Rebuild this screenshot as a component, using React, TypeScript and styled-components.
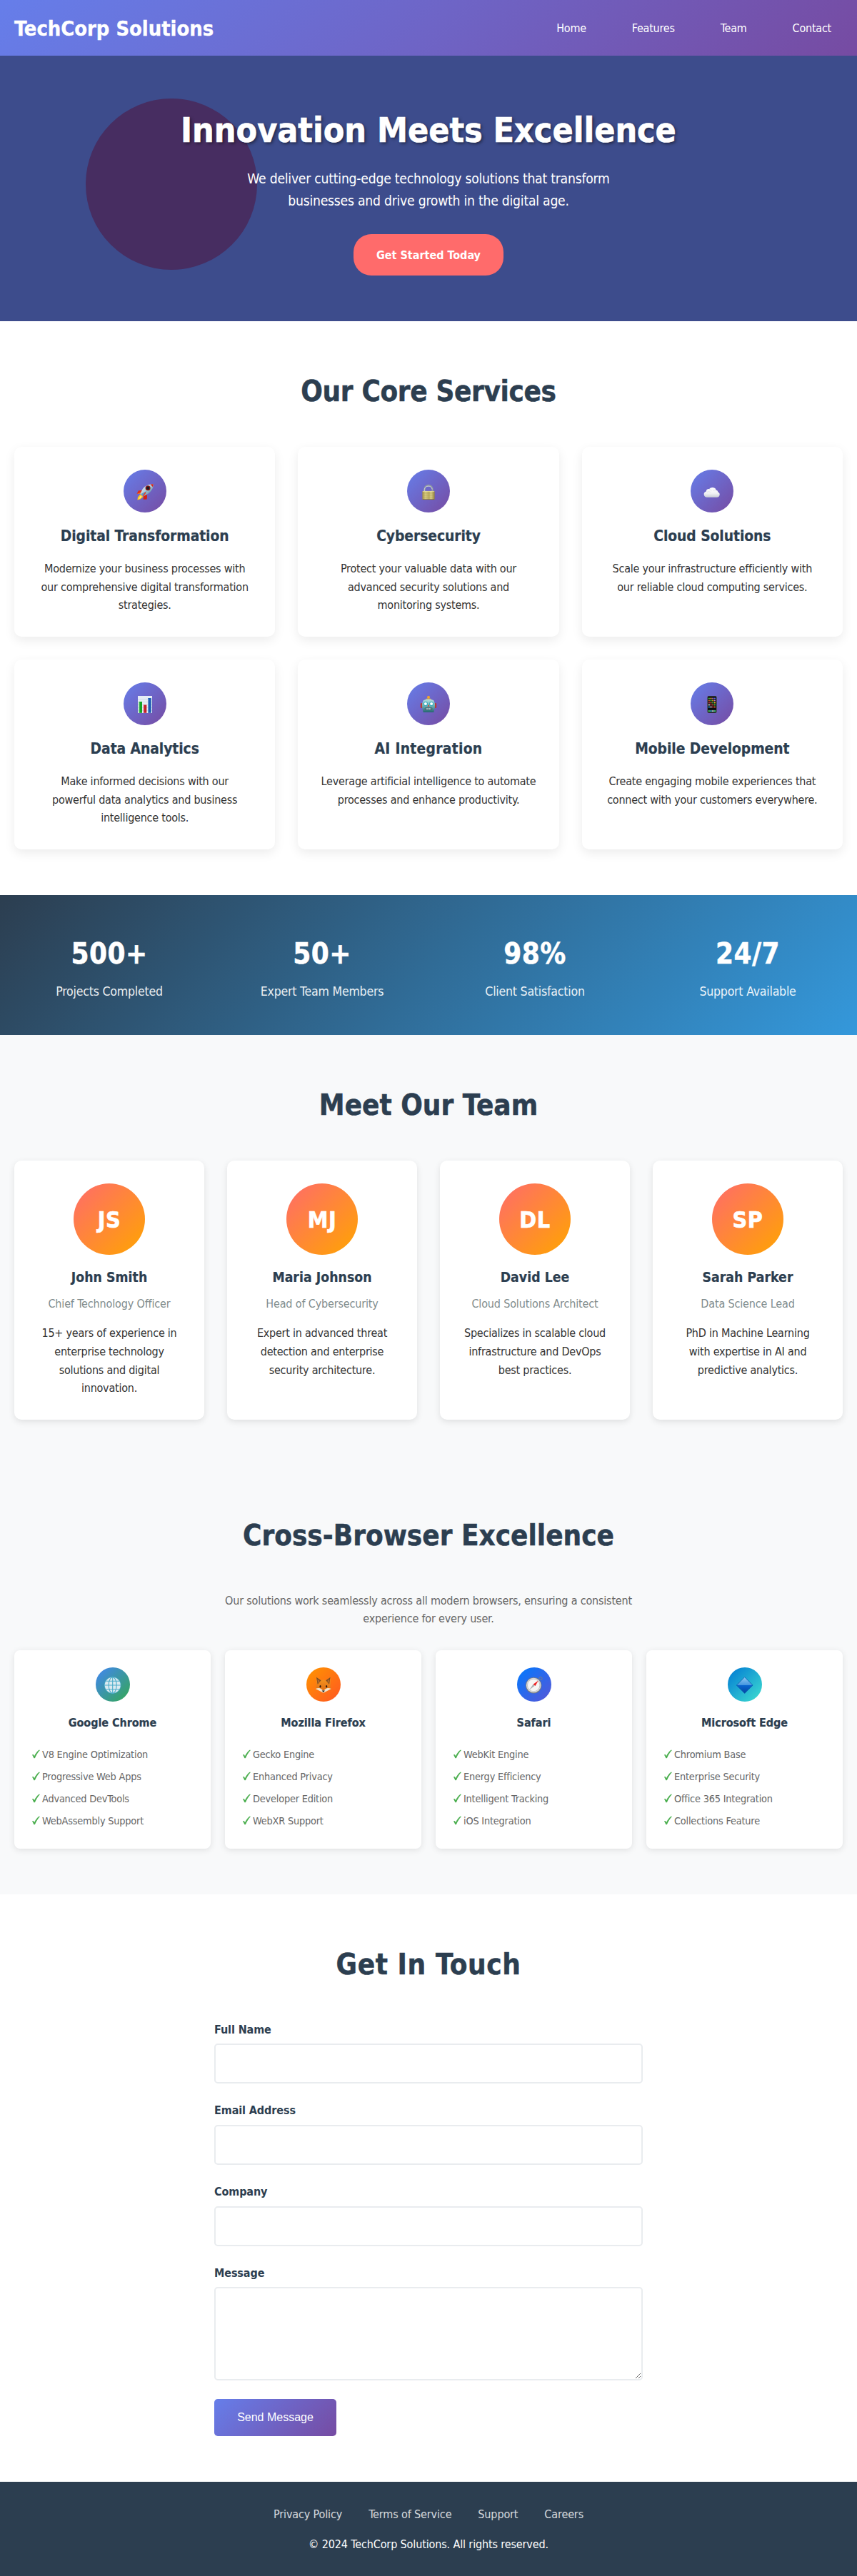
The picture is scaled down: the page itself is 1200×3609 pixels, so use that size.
import React from "react";
import styled, { createGlobalStyle } from "styled-components";

const GlobalStyle = createGlobalStyle`
  * { margin: 0; padding: 0; box-sizing: border-box; }
  body {
    font-family: "DejaVu Sans Condensed", "DejaVu Sans", "Noto Sans", sans-serif;
    font-size: 16px;
    line-height: 1.6;
    letter-spacing: -0.23px;
    color: #333;
    background: #fff;
  }
  h1, h2, h3, h4 {
    letter-spacing: -0.003em;
    -webkit-text-stroke: 0.012em currentColor;
  }
  ul { list-style: none; }
  a { color: inherit; text-decoration: none; }
`;

/* ---------- shared ---------- */

const Container = styled.div`
  max-width: 1200px;
  margin: 0 auto;
  padding: 0 20px;
`;

const Section = styled.section<{ $tint?: boolean }>`
  padding: 64px 0;
  background: ${(p) => (p.$tint ? "#f8f9fa" : "#fff")};
`;

const SectionTitle = styled.h2<{ $track?: number }>`
  padding-top: 2px;
  margin-bottom: 46px;
  font-size: 40px;
  line-height: 64px;
  text-align: center;
  color: #2c3e50;
  letter-spacing: ${(p) => p.$track ?? 0}px;
`;

const Grid = styled.div<{ $cols: number; $gap: number }>`
  display: grid;
  grid-template-columns: repeat(${(p) => p.$cols}, 1fr);
  gap: ${(p) => p.$gap}px;
`;

const Paragraph = styled.p`
  padding-top: 1px;
  margin-bottom: -1px;
  white-space: pre-line;
`;

/* ---------- header ---------- */

const Header = styled.header`
  padding: 16px 0;
  color: #fff;
  background: linear-gradient(135deg, #667eea 0%, #764ba2 100%);
`;

const Nav = styled(Container).attrs({ as: "nav" })`
  display: flex;
  align-items: center;
  justify-content: space-between;
`;

const Logo = styled.div`
  padding-top: 1px;
  margin-bottom: -1px;
  font-size: 28.8px;
  font-weight: bold;
  line-height: 46px;
  letter-spacing: 0;
  -webkit-text-stroke: 0.012em currentColor;
`;

const NavLinks = styled.ul`
  display: flex;
  gap: 32px;
`;

const NavLink = styled.a`
  display: block;
  padding: 9px 16px 7px;
`;

/* ---------- hero ---------- */

const Hero = styled.section`
  position: relative;
  padding: 64px 0;
  text-align: center;
  color: #fff;
  background: #3d4c8c;
`;

const HeroCircle = styled.div`
  position: absolute;
  left: 10%;
  top: 60px;
  width: 240px;
  height: 240px;
  border-radius: 50%;
  background: #472d61;
`;

const HeroContent = styled(Container)`
  position: relative;
`;

const HeroTitle = styled.h1`
  padding-top: 2px;
  margin-bottom: 14px;
  font-size: 48px;
  line-height: 76.8px;
  letter-spacing: -0.05px;
  text-shadow: 2px 2px 4px rgba(0, 0, 0, 0.5);
`;

const HeroText = styled.p`
  max-width: 600px;
  padding-top: 1px;
  margin: 0 auto 31px;
  font-size: 19.2px;
  line-height: 30.72px;
  letter-spacing: -0.24px;
`;

const HeroButton = styled.a`
  display: inline-block;
  vertical-align: top;
  padding: 17px 32px 15px;
  border-radius: 25px;
  font-weight: bold;
  letter-spacing: 0;
  background: #ff6b6b;
`;

/* ---------- services ---------- */

const ServiceCard = styled.article`
  padding: 32px;
  border-radius: 10px;
  text-align: center;
  background: #fff;
  box-shadow: 0 5px 15px rgba(0, 0, 0, 0.08);
`;

const IconCircle = styled.div<{ $size: number; $from: string; $to: string }>`
  display: flex;
  align-items: center;
  justify-content: center;
  width: ${(p) => p.$size}px;
  height: ${(p) => p.$size}px;
  margin: 0 auto 16px;
  padding-top: 2px;
  border-radius: 50%;
  background: linear-gradient(135deg, ${(p) => p.$from}, ${(p) => p.$to});
`;

const ServiceTitle = styled.h3<{ $track?: number }>`
  padding-top: 1px;
  margin-bottom: 15px;
  font-size: 20.8px;
  line-height: 33.28px;
  color: #2c3e50;
  letter-spacing: ${(p) => p.$track ?? -0.05}px;
`;

/* ---------- stats ---------- */

const Stats = styled.section`
  padding: 48px 0;
  text-align: center;
  color: #fff;
  background: linear-gradient(135deg, #2c3e50, #3498db);
`;

const StatNumber = styled.div`
  padding-top: 2px;
  margin-bottom: 6px;
  font-size: 40px;
  font-weight: bold;
  line-height: 64px;
  letter-spacing: 0.4px;
  -webkit-text-stroke: 0.012em currentColor;
`;

const StatLabel = styled.div`
  padding-top: 1px;
  margin-bottom: -1px;
  font-size: 17.6px;
  line-height: 28.16px;
  opacity: 0.9;
`;

/* ---------- team ---------- */

const TeamCard = styled.article`
  padding: 32px;
  border-radius: 10px;
  text-align: center;
  background: #fff;
  box-shadow: 0 3px 10px rgba(0, 0, 0, 0.1);
`;

const Avatar = styled.div`
  display: flex;
  align-items: center;
  justify-content: center;
  width: 100px;
  height: 100px;
  margin: 0 auto 16px;
  padding-top: 3px;
  border-radius: 50%;
  font-size: 32px;
  font-weight: bold;
  letter-spacing: 0.02em;
  -webkit-text-stroke: 0.02em currentColor;
  color: #fff;
  background: linear-gradient(135deg, #ff6b6b, #ffa500);
`;

const MemberName = styled.h3`
  padding-top: 1px;
  margin-bottom: 7px;
  font-size: 19.2px;
  line-height: 30.72px;
  color: #2c3e50;
  letter-spacing: 0.08px;
`;

const Role = styled.p`
  padding-top: 1px;
  margin-bottom: 15px;
  letter-spacing: -0.15px;
  color: #7f8c8d;
`;

/* ---------- browsers ---------- */

const Intro = styled.p`
  max-width: 600px;
  padding-top: 1px;
  margin: 0 auto 31px;
  text-align: center;
  letter-spacing: -0.19px;
  color: #666;
`;

const BrowserCard = styled.article`
  padding: 24px;
  border-radius: 8px;
  background: #fff;
  box-shadow: 0 2px 10px rgba(0, 0, 0, 0.1);
`;

const BrowserName = styled.h4`
  padding-top: 1px;
  margin-bottom: 15px;
  text-align: center;
  color: #2c3e50;
`;

const FeatureItem = styled.li`
  display: flex;
  align-items: center;
  gap: 3px;
  padding: 5px 0 3px;
  font-size: 14.4px;
  line-height: 23.04px;
  letter-spacing: -0.2px;
  color: #666;
`;

/* ---------- contact ---------- */

const Form = styled.form`
  max-width: 600px;
  margin: 0 auto;
`;

const Field = styled.div`
  margin-bottom: 24px;
`;

const Label = styled.label`
  display: block;
  padding-top: 1px;
  margin-bottom: 7px;
  font-weight: bold;
  letter-spacing: -0.1px;
  color: #2c3e50;
`;

const Input = styled.input`
  display: block;
  width: 100%;
  height: 56px;
  padding: 16px;
  border: 2px solid #e9ecef;
  border-radius: 5px;
  font: inherit;
  background: #fff;
`;

const TextArea = styled.textarea`
  display: block;
  width: 100%;
  height: 130.6px;
  margin-bottom: 26.6px;
  padding: 16px;
  border: 2px solid #e9ecef;
  border-radius: 5px;
  font: inherit;
  background: #fff;
  resize: vertical;
`;

const Submit = styled.button`
  display: block;
  width: 171px;
  height: 52px;
  border: 0;
  border-radius: 5px;
  font: 16px "Liberation Sans", Arial, sans-serif;
  color: #fff;
  background: linear-gradient(135deg, #667eea, #764ba2);
`;

/* ---------- footer ---------- */

const Footer = styled.footer`
  padding: 33px 0 31px;
  text-align: center;
  letter-spacing: -0.13px;
  color: #fff;
  background: #2c3e50;
`;

const FooterLinks = styled.div`
  display: flex;
  justify-content: center;
  gap: 37px;
  margin-bottom: 16px;
`;

const FooterLink = styled.a`
  opacity: 0.8;
`;

/* ---------- icons ---------- */

const Svg = styled.svg`
  display: block;
  width: 24px;
  height: 24px;
`;

const Rocket = () => (
  <Svg viewBox="0 0 24 24">
    <defs>
      <linearGradient id="rk" x1="0" y1="0" x2="1" y2="1">
        <stop offset="0" stopColor="#f4f8fa" />
        <stop offset=".45" stopColor="#b5d0dc" />
        <stop offset="1" stopColor="#27608a" />
      </linearGradient>
    </defs>
    <path d="M9 9.5 2.8 10.6.6 14.8l6-.9z" fill="#e52a12" />
    <path d="M14 15.2 15 17.5l-.4 5-5 .3 .4-4.6z" fill="#d6200f" />
    <path d="M.8 15 6.7 12.7 7 14.6z" fill="#f68a1c" />
    <path d="M5.4 15.5 2 19.6 1.4 23.6 5.6 22.3 9.5 19z" fill="#ffc91f" />
    <path d="M6.2 17 3.2 22.5l4-3.3z" fill="#fff29a" />
    <path d="M23.8 1.2C18.2.8 11.6 3.4 8.3 8.8L5.4 14.7l4 3.9 5.7-3C20.8 12 23.9 6.5 23.8 1.2z" fill="url(#rk)" />
    <path d="M23.8 1.2 19.5 1.5 23 5.2z" fill="#d82418" />
    <circle cx="16.1" cy="6.7" r="3.5" fill="#8d1919" />
    <circle cx="16.2" cy="6.7" r="2.2" fill="#171d26" />
    <path d="m6.3 14.9 3 3 5.5-7.2z" fill="#3f8ec1" opacity=".75" />
    <path d="m12.3 12.3-3.7 5.6 1.2.3 3.7-4.6z" fill="#f03a1c" />
  </Svg>
);

const Lock = () => (
  <Svg viewBox="0 0 24 24">
    <defs>
      <linearGradient id="lk" x1="0" x2="1">
        <stop offset="0" stopColor="#a39044" />
        <stop offset=".25" stopColor="#d6ca80" />
        <stop offset=".55" stopColor="#b9aa5c" />
        <stop offset=".7" stopColor="#d9cf8a" />
        <stop offset="1" stopColor="#93813a" />
      </linearGradient>
    </defs>
    <path d="M6.5 12V8.5a5.5 5.7 0 0 1 11 0V12" fill="none" stroke="#8d97a3" strokeWidth="2.3" />
    <path d="M6.3 12V8.5a5.7 5.9 0 0 1 11 0" fill="none" stroke="#d5dbe0" strokeWidth=".9" />
    <rect x="3.4" y="11" width="17.2" height="12" rx=".8" fill="url(#lk)" />
    <path d="M3.5 14h17M3.5 17h17M3.5 20h17" stroke="#a7984d" strokeWidth=".5" opacity=".6" />
    <path d="M3.8 11.4h16.4" stroke="#eee6ad" strokeWidth=".7" />
    <path d="M3.8 22.6h16.4" stroke="#77672a" strokeWidth=".7" />
  </Svg>
);

const Cloud = () => (
  <Svg viewBox="0 0 24 24">
    <defs>
      <linearGradient id="cl" x1="0" y1="0" x2="0" y2="1">
        <stop offset="0" stopColor="#fff" />
        <stop offset=".6" stopColor="#f0f1f4" />
        <stop offset="1" stopColor="#c9cdd5" />
      </linearGradient>
    </defs>
    <path d="M5 19.8a4.5 4.3 0 0 1-1.2-8.4 4 3.7 0 0 1 4.3-3.3 5.2 4.4 0 0 1 9.5 1.4 3.5 3.3 0 0 1 2.900 2.900 3.900 3.900 0 0 1-1.800 7.400z" fill="url(#cl)" />
    <path d="M8 8.500q2.500.2 3.200 2.200M13.500 10.500q2-.9 3.800-.8M5 12.500q2.500-2 5 .2" fill="none" stroke="#d9dce2" strokeWidth=".6" />
  </Svg>
);

const Chart = () => (
  <Svg viewBox="0 0 24 24">
    <rect x="2" y="0" width="20" height="24" fill="#e5edf5" />
    <path d="M2 4.5h20M2 8.5h20M2 12.5h20M2 16.5h20M2 20.5h20" stroke="#b7c9da" strokeWidth=".5" />
    <rect x="3.5" y="8" width="4.5" height="15.8" fill="#12a526" />
    <rect x="9.8" y="12.5" width="4.5" height="11.3" fill="#c3202a" />
    <rect x="16.1" y="3" width="4.6" height="20.8" fill="#1b5cb4" />
    <path d="M4 8.5v15M10.3 13v10.5M16.6 3.5v20" stroke="#fff" opacity=".35" />
  </Svg>
);

const Robot = () => (
  <Svg viewBox="0 0 24 24">
    <defs>
      <linearGradient id="rb" x1="0" y1="0" x2="0" y2="1">
        <stop offset="0" stopColor="#b4e0e0" />
        <stop offset=".6" stopColor="#5fa3aa" />
        <stop offset="1" stopColor="#25646f" />
      </linearGradient>
    </defs>
    <rect x="11" y="1.5" width="2" height="4" fill="#6c7477" />
    <circle cx="12" cy="1.9" r="2" fill="#f2a22a" />
    <rect x="8" y="3.7" width="8" height="2" rx="1" fill="#cfae69" />
    <rect x=".8" y="10" width="3" height="7" rx="1.2" fill="#b63c38" />
    <rect x="20.2" y="10" width="3" height="7" rx="1.2" fill="#b63c38" />
    <path d="M5 6Q12 3.5 19 6q2.5 4 1.9 10l-1.6 7H4.7L3.1 16Q2.5 10 5 6z" fill="url(#rb)" />
    <circle cx="7.9" cy="11" r="3.1" fill="#35aebe" />
    <circle cx="16.1" cy="11" r="3.1" fill="#35aebe" />
    <circle cx="7.9" cy="11" r="2" fill="#fff" />
    <circle cx="16.1" cy="11" r="2" fill="#fff" />
    <path d="m12 12 1.5 2.7h-3z" fill="#d44332" />
    <rect x="6.8" y="16.5" width="10.4" height="3.2" rx="1" fill="#2d515a" />
    <path d="M8 18.1h8" stroke="#e8efef" strokeWidth="1.8" strokeDasharray="1.5 .7" />
  </Svg>
);

const appColours = ["#4cc94f", "#e9e9e9", "#b96dd8", "#e6662e", "#22a8e8", "#f3ba2a", "#d8404d", "#4c6fe0"];

const Phone = () => (
  <Svg viewBox="0 0 24 24">
    <rect x="5.3" y="0" width="13.4" height="24" rx="1.8" fill="#5b5e5e" />
    <rect x="5.9" y=".5" width="12.2" height="23" rx="1.4" fill="#090b0f" />
    {[0, 1, 2, 3, 4].map((r) =>
      [0, 1, 2, 3].map((c) => (
        <rect key={`${r}-${c}`} x={6.9 + c * 2.7} y={2.6 + r * 3} width="1.9" height="1.8" rx=".4"
          fill={appColours[(r * 3 + c * 5) % 8]} />
      ))
    )}
    <rect x="6.3" y="19.8" width="11.4" height="2.7" fill="#31474d" />
    {["#3fdc52", "#31c5e8", "#e7f2ee", "#44d879"].map((f, c) => (
      <rect key={f} x={6.9 + c * 2.7} y="20.2" width="1.9" height="1.9" rx=".4" fill={f} />
    ))}
  </Svg>
);

const Globe = () => (
  <Svg viewBox="0 0 24 24">
    <circle cx="11.7" cy="12" r="11.7" fill="#4bacc9" />
    <circle cx="11.7" cy="12" r="11" fill="#dbeaf0" />
    <g fill="none" stroke="#4bacc9" strokeWidth="1.1">
      <path d="M11.7.5v23M.5 12h22.5M2.5 6.2h18.5M2.5 17.8h18.5" />
      <ellipse cx="11.7" cy="12" rx="5.5" ry="11.3" />
    </g>
  </Svg>
);

const Fox = () => (
  <Svg viewBox="0 0 24 24">
    <defs>
      <linearGradient id="fx" x1="0" y1="0" x2="0" y2="1">
        <stop offset="0" stopColor="#f79a22" />
        <stop offset="1" stopColor="#dc6713" />
      </linearGradient>
    </defs>
    <path d="M2 .8 8.5 5.2Q12 4 15.3 5.2L21.6.8l.2 12.2 1 4-6.600 3.500-4.300 2.300-4.400-2.300L.8 17l1-4z" fill="url(#fx)" />
    <path d="m2 .8 6.500 4.400-4.800 5.500zM21.600.8l-6.300 4.400 4.700 5.500z" fill="#7a4a21" />
    <path d="m3.300 3.200 3.500 2.800-2.700 3.500zM20.300 3.200 17 6l2.600 3.500z" fill="#b46a2c" />
    <path d="M.8 17q5-2.300 8 .2l3 2.500 3-2.500q3-2.500 8-.2l-6.600 3.500-4.300 2.300-4.400-2.300z" fill="#f4e5cd" />
    <ellipse cx="7.5" cy="13.7" rx="1.1" ry="1.7" fill="#2b1a10" />
    <ellipse cx="16.2" cy="13.7" rx="1.1" ry="1.7" fill="#2b1a10" />
    <path d="M9.700 19.500h4.200l-2.100 2.500z" fill="#17171a" />
  </Svg>
);

const Compass = () => (
  <Svg viewBox="0 0 24 24">
    <circle cx="21" cy="2.6" r="2.1" fill="none" stroke="#777e88" strokeWidth="1" />
    <circle cx="11.2" cy="12.3" r="11.2" fill="#777b80" />
    <circle cx="11.2" cy="12" r="10.3" fill="#d9dbdd" />
    <circle cx="11.2" cy="12" r="8.7" fill="#f6f6f5" stroke="#a8abad" strokeWidth=".6" />
    <path d="m17.8 5.5-4.3 7.6-3-2.3z" fill="#ee2022" />
    <path d="m5 18.8 5.5-8 2.2 1.9z" fill="#a9adb0" />
  </Svg>
);

const Diamond = () => (
  <Svg viewBox="0 0 24 24">
    <defs>
      <linearGradient id="dm" x1="0" y1="0" x2="0" y2="1">
        <stop offset="0" stopColor="#8cc8f3" />
        <stop offset=".48" stopColor="#4797e0" />
        <stop offset=".52" stopColor="#0864ce" />
        <stop offset="1" stopColor="#0447a3" />
      </linearGradient>
    </defs>
    <path d="M11.7.6 23.1 12 11.7 23.4.3 12z" fill="url(#dm)" stroke="#0a5aac" strokeWidth=".8" />
  </Svg>
);

const CheckSvg = styled.svg`
  display: block;
  flex: none;
  width: 12px;
  height: 13px;
  margin-bottom: 1px;
`;

const Check = () => (
  <CheckSvg viewBox="0 0 12 13">
    <path d="M1 7.6C1.700 6.700 2.900 6.800 3.400 7.900l.6 1.300C5.600 5.900 7.600 3.100 9.900 1.200 10.500.8 11.300.8 11.900 1 8.900 4.300 6.700 8 5 12c-.6.4-1.300.4-1.700 0C2.600 10.500 1.900 9 1 7.600z" fill="#4caf50" />
  </CheckSvg>
);

/* ---------- data ---------- */

const services = [
  { icon: <Rocket />, title: "Digital Transformation", text: "Modernize your business processes with our comprehensive digital transformation strategies." },
  { icon: <Lock />, title: "Cybersecurity", text: "Protect your valuable data with our advanced security solutions and monitoring systems." },
  { icon: <Cloud />, title: "Cloud Solutions", text: "Scale your infrastructure efficiently with our reliable cloud computing services." },
  { icon: <Chart />, title: "Data Analytics", text: "Make informed decisions with our\npowerful data analytics and business\nintelligence tools." },
  { icon: <Robot />, title: "AI Integration", track: 0.3, text: "Leverage artificial intelligence to automate\nprocesses and enhance productivity." },
  { icon: <Phone />, title: "Mobile Development", text: "Create engaging mobile experiences that connect with your customers everywhere." },
];

const stats = [
  ["500+", "Projects Completed"],
  ["50+", "Expert Team Members"],
  ["98%", "Client Satisfaction"],
  ["24/7", "Support Available"],
];

const team = [
  ["JS", "John Smith", "Chief Technology Officer", "15+ years of experience in enterprise technology solutions and digital innovation."],
  ["MJ", "Maria Johnson", "Head of Cybersecurity", "Expert in advanced threat detection and enterprise security architecture."],
  ["DL", "David Lee", "Cloud Solutions Architect", "Specializes in scalable cloud infrastructure and DevOps best practices."],
  ["SP", "Sarah Parker", "Data Science Lead", "PhD in Machine Learning with expertise in AI and predictive analytics."],
];

const browsers = [
  { icon: <Globe />, from: "#4285f4", to: "#34a853", name: "Google Chrome", features: ["V8 Engine Optimization", "Progressive Web Apps", "Advanced DevTools", "WebAssembly Support"] },
  { icon: <Fox />, from: "#ff9500", to: "#ff5722", name: "Mozilla Firefox", features: ["Gecko Engine", "Enhanced Privacy", "Developer Edition", "WebXR Support"] },
  { icon: <Compass />, from: "#007aff", to: "#5856d6", name: "Safari", features: ["WebKit Engine", "Energy Efficiency", "Intelligent Tracking", "iOS Integration"] },
  { icon: <Diamond />, from: "#0078d4", to: "#40e0d0", name: "Microsoft Edge", features: ["Chromium Base", "Enterprise Security", "Office 365 Integration", "Collections Feature"] },
];

export default function App() {
  return (
    <>
      <GlobalStyle />
      <Header>
        <Nav>
          <Logo>TechCorp Solutions</Logo>
          <NavLinks>
            {["Home", "Features", "Team", "Contact"].map((l) => (
              <li key={l}><NavLink href="#">{l}</NavLink></li>
            ))}
          </NavLinks>
        </Nav>
      </Header>

      <Hero>
        <HeroCircle />
        <HeroContent>
          <HeroTitle>Innovation Meets Excellence</HeroTitle>
          <HeroText>
            We deliver cutting-edge technology solutions that transform businesses and drive growth in the digital age.
          </HeroText>
          <HeroButton href="#">Get Started Today</HeroButton>
        </HeroContent>
      </Hero>

      <Section>
        <Container>
          <SectionTitle $track={-0.35}>Our Core Services</SectionTitle>
          <Grid $cols={3} $gap={32}>
            {services.map((s) => (
              <ServiceCard key={s.title}>
                <IconCircle $size={60} $from="#667eea" $to="#764ba2">{s.icon}</IconCircle>
                <ServiceTitle $track={s.track}>{s.title}</ServiceTitle>
                <Paragraph>{s.text}</Paragraph>
              </ServiceCard>
            ))}
          </Grid>
        </Container>
      </Section>

      <Stats>
        <Container>
          <Grid $cols={4} $gap={32}>
            {stats.map(([n, l]) => (
              <div key={n}>
                <StatNumber>{n}</StatNumber>
                <StatLabel>{l}</StatLabel>
              </div>
            ))}
          </Grid>
        </Container>
      </Stats>

      <Section $tint>
        <Container>
          <SectionTitle>Meet Our Team</SectionTitle>
          <Grid $cols={4} $gap={32}>
            {team.map(([initials, name, role, bio]) => (
              <TeamCard key={name}>
                <Avatar>{initials}</Avatar>
                <MemberName>{name}</MemberName>
                <Role>{role}</Role>
                <Paragraph>{bio}</Paragraph>
              </TeamCard>
            ))}
          </Grid>
        </Container>
      </Section>

      <Section $tint>
        <Container>
          <SectionTitle>Cross-Browser Excellence</SectionTitle>
          <Intro>Our solutions work seamlessly across all modern browsers, ensuring a consistent experience for every user.</Intro>
          <Grid $cols={4} $gap={20}>
            {browsers.map((b) => (
              <BrowserCard key={b.name}>
                <IconCircle $size={48} $from={b.from} $to={b.to}>{b.icon}</IconCircle>
                <BrowserName>{b.name}</BrowserName>
                <ul>
                  {b.features.map((f) => (
                    <FeatureItem key={f}><Check />{f}</FeatureItem>
                  ))}
                </ul>
              </BrowserCard>
            ))}
          </Grid>
        </Container>
      </Section>

      <Section>
        <Container>
          <SectionTitle $track={0.6}>Get In Touch</SectionTitle>
          <Form>
            <Field><Label htmlFor="name">Full Name</Label><Input id="name" /></Field>
            <Field><Label htmlFor="email">Email Address</Label><Input id="email" type="email" /></Field>
            <Field><Label htmlFor="company">Company</Label><Input id="company" /></Field>
            <Label htmlFor="message">Message</Label>
            <TextArea id="message" />
            <Submit type="button">Send Message</Submit>
          </Form>
        </Container>
      </Section>

      <Footer>
        <FooterLinks>
          {["Privacy Policy", "Terms of Service", "Support", "Careers"].map((l) => (
            <FooterLink key={l} href="#">{l}</FooterLink>
          ))}
        </FooterLinks>
        <p>© 2024 TechCorp Solutions. All rights reserved.</p>
      </Footer>
    </>
  );
}
